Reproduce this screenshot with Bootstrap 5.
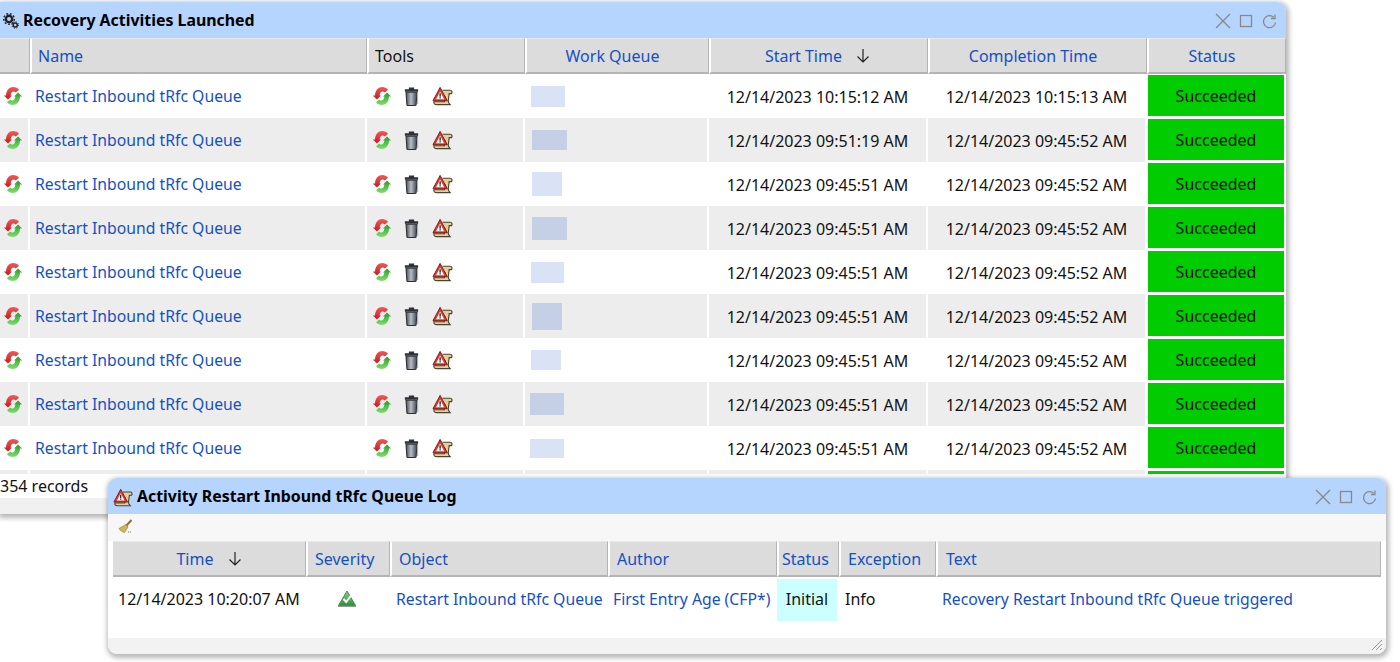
<!DOCTYPE html>
<html lang="en">
<head>
<meta charset="utf-8">
<title>Recovery Activities</title>
<link rel="stylesheet" href="https://cdn.jsdelivr.net/npm/bootstrap@5.3.0/dist/css/bootstrap.min.css">
<style>
html,body{height:100%;overflow:hidden;background:#fff;margin:0}
body{font-family:"Noto Sans","Liberation Sans",sans-serif;font-size:16px;color:#111;position:relative}
a{color:#1450c4;text-decoration:none;font-size:15.75px}
.win{position:absolute;background:#fff;border-radius:0 9px 9px 0;box-shadow:1px 2px 5px 2px rgba(0,0,0,.28);overflow:hidden}
.win-a{left:0;top:2px;width:1286px;height:512px}
.win-b{left:108px;top:478px;width:1278px;height:176px;border-radius:9px}
.title-bar{height:36px;background:#b5d5ff;font-weight:700;font-size:15.9px;color:#000;white-space:nowrap}
.win-a .title-bar{padding:2px 7px 0 3px}
.win-b .title-bar{padding:2px 7px 0 5px}
.ctl{stroke:#888;fill:none}
.grid-wrap{height:436px;overflow:hidden}
.grid{table-layout:fixed;border-collapse:separate;border-spacing:0;margin:0;color:#111;vertical-align:middle}
.grid.table>:not(caption)>*>*{padding:0;border-width:0;background:transparent;box-shadow:none;color:inherit;font-weight:400;vertical-align:middle;white-space:nowrap}
.grid.table>thead>tr>th{height:36px;background:#dcdcdc;border-style:solid;border-width:1px 1px 2px 2px;border-color:#e8e8e8 #b4b4b4 #b4b4b4 #fff;color:#1450c4;padding-top:1px}
.grid.table>thead>tr>th:first-child{border-left-width:0}
.grid tbody tr{height:44px}
.grid.table>tbody>tr>td{border-right:2px solid #fff}
.grid.table>tbody>tr:nth-child(even)>td{background:#ededed}
.grid.table>tbody>tr>td.state-ok{background:#00cc00;border:solid #fff;border-width:1px 2px 2px 1px;text-align:center}
.grid-a{width:1286px}
.c0{width:30px}.c1{width:337px}.c2{width:158px}.c3{width:184px}.c4{width:219px}.c5{width:219px}.c6{width:139px}
.grid.table>thead>tr>th.th-left-a{padding-left:6px}
.grid.table>thead>tr>th.th-tools{padding-left:6px;color:#111}
.grid.table>thead>tr>th.th-mid{text-align:center;padding-right:10px}
.grid.table>thead>tr>th.th-start{padding-right:3px}
.grid.table>tbody>tr>td.name-cell{padding-left:5px;padding-top:1px}
.grid.table>tbody>tr>td.tool-cell{padding-left:5px}
.tool-row{gap:12px}
.tool-row .log-ic{margin-left:1px}
.grid.table>tbody>tr>td.first-ic{padding-left:3px}
.grid.table>tbody>tr>td.mid{text-align:center;padding-top:1px}
.arrow{margin-left:10px;vertical-align:-2px}
.ic{display:block;flex:none}
.mask{display:block;margin-left:6px}
.m1{width:34px;height:21px;background:#d9e3f5}
.m2{width:35px;height:20px;background:#c5d0e6;margin-left:7px}
.m3{width:30px;height:24px;background:#d9e3f5;margin-left:7px}
.m4{width:35px;height:23px;background:#c5d0e6;margin-left:7px}
.m5{width:33px;height:21px;background:#d9e3f5}
.m6{width:30px;height:27px;background:#c5d0e6;margin-left:7px}
.m7{width:30px;height:20px;background:#d9e3f5}
.m8{width:34px;height:22px;background:#c5d0e6;margin-left:5px}
.m9{width:34px;height:19px;background:#d9e3f5;margin-left:5px}
.foot-txt{height:24px;line-height:24px;white-space:nowrap}
.foot-strip{height:16px;background:#f0f0f0}
.tool-strip{height:27px;background:#f7f7f7;padding:5px 0 0 10px}
.grid-b-wrap{padding:0 5px}
.grid-b{width:1268px}
.b0{width:193px}.b1{width:84px}.b2{width:218px}.b3{width:169px}.b4{width:62px}.b5{width:97px}.b6{width:445px}
.grid.table>thead>tr>th.pl-obj,.grid.table>thead>tr>th.pl-sev,.grid.table>thead>tr>th.pl-auth,.grid.table>thead>tr>th.pl-exc{padding-left:7px}
.grid.table>thead>tr>th.pl-stat{padding-left:3px}
.grid.table>thead>tr>th.pl-text{padding-left:8px}
.grid.table>thead>tr>th.th-time{padding-right:0;border-left:0}
.grid.table>tbody>tr>td.b-time,.grid.table>tbody>tr>td.b-auth{padding-left:5px}
.grid.table>tbody>tr>td.b-obj,.grid.table>tbody>tr>td.b-text{padding-left:6px}
.grid.table>tbody>tr>td.b-exc{padding-left:6px}
.grid.table>tbody>tr>td.b-init{background:#ccffff;text-align:center;border-top:2px solid #fff;padding-bottom:2px}
.spacer{height:17px}
.foot-b{height:16px;background:#f2f2f2}
.grip{position:absolute;right:3px;bottom:3px}
</style>
</head>
<body>
<svg width="0" height="0" class="position-absolute">
<defs>
<linearGradient id="gr" x1="0" y1="0" x2="0" y2="1"><stop offset="0" stop-color="#f25a5a"/><stop offset="1" stop-color="#c81818"/></linearGradient>
<linearGradient id="gg" x1="0" y1="1" x2="0" y2="0"><stop offset="0" stop-color="#2c9a2c"/><stop offset="1" stop-color="#7ee06a"/></linearGradient>
<linearGradient id="gt" x1="0" y1="0" x2="1" y2="0"><stop offset="0" stop-color="#4a4a4a"/><stop offset=".45" stop-color="#b8bec6"/><stop offset="1" stop-color="#3c4450"/></linearGradient>
<linearGradient id="gs" x1="0" y1="0" x2="0" y2="1"><stop offset="0" stop-color="#8ed08a"/><stop offset="1" stop-color="#2f8f3a"/></linearGradient>
<symbol id="i-restart" viewBox="0 0 20 20">
<path transform="rotate(180 10 10)" d="M3 9.500C3.200 4.200 6.200 1 10.300 1 12.600 1 14.600 2 16 3.800L12.800 6.600C12.200 5.800 11.400 5.400 10.400 5.400 9 5.400 8 6.800 7.600 9.500L9 9.500 5 13.500 .8 9.500Z" style="fill:url(#gg)"/>
<path d="M3 9.500C3.200 4.200 6.200 1 10.300 1 12.600 1 14.600 2 16 3.800L12.800 6.600C12.200 5.800 11.400 5.400 10.400 5.400 9 5.400 8 6.800 7.600 9.500L9 9.500 5 13.500 .8 9.500Z" style="fill:url(#gr)"/>
</symbol>
<symbol id="i-trash" viewBox="0 0 14 18">
<path d="M4.500 .5h5v1.600h3.800v2.400H.7V2.100h3.800z" fill="#2e3138"/>
<path d="M1.800 5h10.400l-.8 11.500c0 .6-.5 1-1 1H3.600c-.5 0-1-.4-1-1z" fill="url(#gt)" stroke="#2c3038" stroke-width="1"/>
<path d="M12.800 6v10" stroke="#9ab4d2" stroke-width="1"/>
</symbol>
<symbol id="i-log" viewBox="0 0 22 20">
<path d="M11 4h8c2 0 2.500 2 1.500 3.500H18l-1 8c0 1.500 1 2.500 2 3.500H5c-2 0-3.500-1-3-3h11l.5-6" fill="#e0cf9c" stroke="#4b4530" stroke-width="1.200"/>
<path d="M1 15 8.500 1 16 15z" fill="#e4392f" stroke="#7a1510" stroke-width="1"/>
<path d="M4.300 13.300 8.500 5.300l4.200 8z" fill="#fff"/>
<path d="M8.500 7v3.800M8.500 11.300v1.300" stroke="#111" stroke-width="1.300"/>
</symbol>
<symbol id="i-sev" viewBox="0 0 20 18">
<path d="M10 1 18.500 15.500H1.500z" fill="url(#gs)" stroke="#4a8a4e" stroke-width="1"/>
<path d="M1.500 15h17l.8 1.800H.7z" fill="#6d7a70"/>
<path d="M6.500 9l2.700 3 4.500-6" fill="none" stroke="#fff" stroke-width="2"/>
</symbol>
</defs>
</svg>

<section class="win win-a">
  <div class="title-bar d-flex align-items-center">
    <svg class="ic me-1" width="16" height="16" viewBox="0 0 16 16"><circle cx="6" cy="6" r="3.200" fill="none" stroke="#222" stroke-width="2.400"/><circle cx="6" cy="6" r="5.300" fill="none" stroke="#222" stroke-width="1.500" stroke-dasharray="1.800 1.800"/><circle cx="12.200" cy="12" r="2" fill="none" stroke="#222" stroke-width="1.500"/><circle cx="12.200" cy="12" r="3.300" fill="none" stroke="#222" stroke-width="1" stroke-dasharray="1.200 1.400"/></svg>
    <span class="flex-grow-1">Recovery Activities Launched</span>
    <svg class="ic ctl" width="64" height="16" viewBox="0 0 64 16"><path d="M1 1l14 14M15 1 1 15" stroke-width="1.300"/><rect x="25.500" y="2.500" width="11" height="11" stroke-width="1.300"/><path d="M60.500 9.500a6 6 0 1 1-1.800-5.200M60 1.500v4h-4" stroke-width="1.300"/></svg>
  </div>
  <div class="grid-wrap">
    <table class="table grid grid-a">
      <colgroup><col class="c0"><col class="c1"><col class="c2"><col class="c3"><col class="c4"><col class="c5"><col class="c6"></colgroup>
      <thead><tr>
        <th></th><th class="th-left-a">Name</th><th class="th-tools">Tools</th><th class="th-mid">Work Queue</th>
        <th class="th-mid th-start">Start Time <svg class="arrow" width="14" height="16" viewBox="0 0 14 16"><path d="M7 1v13M1.500 8.500 7 14l5.500-5.500" fill="none" stroke="#222" stroke-width="1.200"/></svg></th>
        <th class="th-mid">Completion Time</th><th class="th-mid">Status</th>
      </tr></thead>
      <tbody>
        <tr><td class="first-ic"><svg class="ic" width="20" height="20"><use href="#i-restart"/></svg></td><td class="name-cell"><a href="#">Restart Inbound tRfc Queue</a></td><td class="tool-cell"><div class="d-flex align-items-center tool-row"><svg class="ic" width="20" height="20"><use href="#i-restart"/></svg><svg class="ic" width="15" height="19"><use href="#i-trash"/></svg><svg class="ic log-ic" width="21" height="20"><use href="#i-log"/></svg></div></td><td><span class="mask m1"></span></td><td class="mid">12/14/2023 10:15:12 AM</td><td class="mid">12/14/2023 10:15:13 AM</td><td class="state-ok">Succeeded</td></tr>
        <tr><td class="first-ic"><svg class="ic" width="20" height="20"><use href="#i-restart"/></svg></td><td class="name-cell"><a href="#">Restart Inbound tRfc Queue</a></td><td class="tool-cell"><div class="d-flex align-items-center tool-row"><svg class="ic" width="20" height="20"><use href="#i-restart"/></svg><svg class="ic" width="15" height="19"><use href="#i-trash"/></svg><svg class="ic log-ic" width="21" height="20"><use href="#i-log"/></svg></div></td><td><span class="mask m2"></span></td><td class="mid">12/14/2023 09:51:19 AM</td><td class="mid">12/14/2023 09:45:52 AM</td><td class="state-ok">Succeeded</td></tr>
        <tr><td class="first-ic"><svg class="ic" width="20" height="20"><use href="#i-restart"/></svg></td><td class="name-cell"><a href="#">Restart Inbound tRfc Queue</a></td><td class="tool-cell"><div class="d-flex align-items-center tool-row"><svg class="ic" width="20" height="20"><use href="#i-restart"/></svg><svg class="ic" width="15" height="19"><use href="#i-trash"/></svg><svg class="ic log-ic" width="21" height="20"><use href="#i-log"/></svg></div></td><td><span class="mask m3"></span></td><td class="mid">12/14/2023 09:45:51 AM</td><td class="mid">12/14/2023 09:45:52 AM</td><td class="state-ok">Succeeded</td></tr>
        <tr><td class="first-ic"><svg class="ic" width="20" height="20"><use href="#i-restart"/></svg></td><td class="name-cell"><a href="#">Restart Inbound tRfc Queue</a></td><td class="tool-cell"><div class="d-flex align-items-center tool-row"><svg class="ic" width="20" height="20"><use href="#i-restart"/></svg><svg class="ic" width="15" height="19"><use href="#i-trash"/></svg><svg class="ic log-ic" width="21" height="20"><use href="#i-log"/></svg></div></td><td><span class="mask m4"></span></td><td class="mid">12/14/2023 09:45:51 AM</td><td class="mid">12/14/2023 09:45:52 AM</td><td class="state-ok">Succeeded</td></tr>
        <tr><td class="first-ic"><svg class="ic" width="20" height="20"><use href="#i-restart"/></svg></td><td class="name-cell"><a href="#">Restart Inbound tRfc Queue</a></td><td class="tool-cell"><div class="d-flex align-items-center tool-row"><svg class="ic" width="20" height="20"><use href="#i-restart"/></svg><svg class="ic" width="15" height="19"><use href="#i-trash"/></svg><svg class="ic log-ic" width="21" height="20"><use href="#i-log"/></svg></div></td><td><span class="mask m5"></span></td><td class="mid">12/14/2023 09:45:51 AM</td><td class="mid">12/14/2023 09:45:52 AM</td><td class="state-ok">Succeeded</td></tr>
        <tr><td class="first-ic"><svg class="ic" width="20" height="20"><use href="#i-restart"/></svg></td><td class="name-cell"><a href="#">Restart Inbound tRfc Queue</a></td><td class="tool-cell"><div class="d-flex align-items-center tool-row"><svg class="ic" width="20" height="20"><use href="#i-restart"/></svg><svg class="ic" width="15" height="19"><use href="#i-trash"/></svg><svg class="ic log-ic" width="21" height="20"><use href="#i-log"/></svg></div></td><td><span class="mask m6"></span></td><td class="mid">12/14/2023 09:45:51 AM</td><td class="mid">12/14/2023 09:45:52 AM</td><td class="state-ok">Succeeded</td></tr>
        <tr><td class="first-ic"><svg class="ic" width="20" height="20"><use href="#i-restart"/></svg></td><td class="name-cell"><a href="#">Restart Inbound tRfc Queue</a></td><td class="tool-cell"><div class="d-flex align-items-center tool-row"><svg class="ic" width="20" height="20"><use href="#i-restart"/></svg><svg class="ic" width="15" height="19"><use href="#i-trash"/></svg><svg class="ic log-ic" width="21" height="20"><use href="#i-log"/></svg></div></td><td><span class="mask m7"></span></td><td class="mid">12/14/2023 09:45:51 AM</td><td class="mid">12/14/2023 09:45:52 AM</td><td class="state-ok">Succeeded</td></tr>
        <tr><td class="first-ic"><svg class="ic" width="20" height="20"><use href="#i-restart"/></svg></td><td class="name-cell"><a href="#">Restart Inbound tRfc Queue</a></td><td class="tool-cell"><div class="d-flex align-items-center tool-row"><svg class="ic" width="20" height="20"><use href="#i-restart"/></svg><svg class="ic" width="15" height="19"><use href="#i-trash"/></svg><svg class="ic log-ic" width="21" height="20"><use href="#i-log"/></svg></div></td><td><span class="mask m8"></span></td><td class="mid">12/14/2023 09:45:51 AM</td><td class="mid">12/14/2023 09:45:52 AM</td><td class="state-ok">Succeeded</td></tr>
        <tr><td class="first-ic"><svg class="ic" width="20" height="20"><use href="#i-restart"/></svg></td><td class="name-cell"><a href="#">Restart Inbound tRfc Queue</a></td><td class="tool-cell"><div class="d-flex align-items-center tool-row"><svg class="ic" width="20" height="20"><use href="#i-restart"/></svg><svg class="ic" width="15" height="19"><use href="#i-trash"/></svg><svg class="ic log-ic" width="21" height="20"><use href="#i-log"/></svg></div></td><td><span class="mask m9"></span></td><td class="mid">12/14/2023 09:45:51 AM</td><td class="mid">12/14/2023 09:45:52 AM</td><td class="state-ok">Succeeded</td></tr>
        <tr><td></td><td></td><td></td><td></td><td></td><td></td><td class="state-ok"></td></tr>
      </tbody>
    </table>
  </div>
  <div class="foot-txt">354 records</div>
  <div class="foot-strip"></div>
</section>

<section class="win win-b">
  <div class="title-bar d-flex align-items-center">
    <svg class="ic me-1" width="20" height="19"><use href="#i-log"/></svg>
    <span class="flex-grow-1">Activity Restart Inbound tRfc Queue Log</span>
    <svg class="ic ctl" width="64" height="16" viewBox="0 0 64 16"><path d="M1 1l14 14M15 1 1 15" stroke-width="1.300"/><rect x="25.500" y="2.500" width="11" height="11" stroke-width="1.300"/><path d="M60.500 9.500a6 6 0 1 1-1.800-5.200M60 1.500v4h-4" stroke-width="1.300"/></svg>
  </div>
  <div class="tool-strip">
    <svg class="ic" width="15" height="15" viewBox="0 0 15 15"><path d="M13.500 1 8 7" stroke="#9a6a32" stroke-width="2"/><path d="M8 5.500 10 8l-3.500 5.500C4.500 13 2 11.500 1 9.500z" fill="#d2b45c" stroke="#8e7a3a" stroke-width=".6"/><path d="M10 13h1.200M12 13h1" stroke="#777" stroke-width="1.200"/></svg>
  </div>
  <div class="grid-b-wrap">
    <table class="table grid grid-b">
      <colgroup><col class="b0"><col class="b1"><col class="b2"><col class="b3"><col class="b4"><col class="b5"><col class="b6"></colgroup>
      <thead><tr>
        <th class="th-mid th-time">Time <svg class="arrow" width="14" height="16" viewBox="0 0 14 16"><path d="M7 1v13M1.500 8.500 7 14l5.500-5.500" fill="none" stroke="#222" stroke-width="1.200"/></svg></th>
        <th class="pl-sev">Severity</th><th class="pl-obj">Object</th><th class="pl-auth">Author</th><th class="pl-stat">Status</th><th class="pl-exc">Exception</th><th class="pl-text">Text</th>
      </tr></thead>
      <tbody>
        <tr><td class="b-time">12/14/2023 10:20:07 AM</td><td><svg class="ic mx-auto" width="20" height="18"><use href="#i-sev"/></svg></td><td class="b-obj"><a href="#">Restart Inbound tRfc Queue</a></td><td class="b-auth"><a href="#">First Entry Age (CFP*)</a></td><td class="b-init">Initial</td><td class="b-exc">Info</td><td class="b-text"><a href="#">Recovery Restart Inbound tRfc Queue triggered</a></td></tr>
      </tbody>
    </table>
  </div>
  <div class="spacer"></div>
  <div class="foot-b"></div>
  <svg class="grip" width="12" height="12" viewBox="0 0 12 12"><path d="M1 11 11 1M5 11l6-6M9 11l2-2" stroke="#999" stroke-width="1" fill="none"/></svg>
</section>
<script src="https://cdn.jsdelivr.net/npm/bootstrap@5.3.0/dist/js/bootstrap.bundle.min.js"></script>
</body>
</html>
